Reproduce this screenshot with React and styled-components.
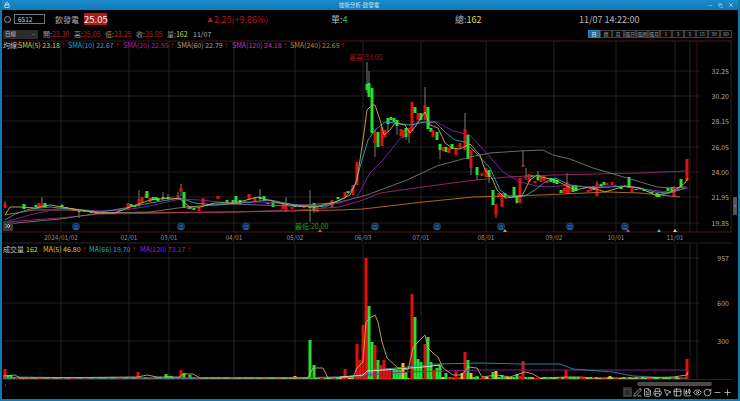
import React from "react";
import styled, { createGlobalStyle } from "styled-components";
import {
  Square,
  PenLine,
  FileText,
  Printer,
  MousePointer2,
  Table2,
  ChartCandlestick,
  Eye,
  RotateCw,
  Minus,
  Plus,
  Lock,
  ChevronsRight,
  ChevronDown,
  ChevronLeft,
  X,
  Copy,
} from "lucide-react";

const RED = "#e01010";
const GREEN = "#22e030";
const GOLD = "#f0c020";

const FONT = `"Noto Sans CJK TC", "Liberation Sans", sans-serif`;

// price panel: [x, bodyTop, bodyBottom, up?, wickTop, wickBottom]
const candles = [
  [5, 204, 208, 1, 201, 208], [24, 204, 209, 0], [36, 205, 207, 0], [39, 203, 208, 1], [42, 204, 206, 1, 197, 207],
  [45, 203, 207, 0], [62, 205, 207, 0, 204, 209], [79, 211, 212, 0, 210, 218], [120, 209, 211, 1], [128, 203, 209, 1],
  [131, 204, 206, 0], [135, 205, 207, 0], [139, 199, 206, 1, 190, 207], [142, 197, 203, 1], [146, 194, 198, 1],
  [147, 191, 198, 0], [150, 198, 202, 1], [153, 197, 200, 0], [156, 197, 200, 0], [158, 198, 201, 0], [163, 197, 199, 0, 192, 200],
  [168, 197, 199, 0, 194, 200], [178, 195, 198, 1, 192, 199], [181, 188, 192, 1, 184, 196], [184, 192, 208, 0], [188, 206, 209, 1],
  [190, 207, 209, 0], [194, 208, 210, 0], [199, 207, 211, 1], [203, 198, 205, 1], [218, 196, 199, 1], [227, 200, 203, 0],
  [233, 200, 204, 0], [236, 196, 203, 0], [240, 200, 204, 0], [249, 194, 200, 1], [255, 197, 201, 1], [260, 197, 199, 0, 189, 201],
  [264, 196, 201, 0], [273, 202, 207, 0], [283, 204, 209, 1], [286, 203, 211, 1, 197, 212], [292, 207, 209, 1], [295, 204, 207, 0],
  [310, 207, 208, 0, 190, 222], [314, 203, 211, 0, 203, 213], [317, 207, 212, 1], [332, 200, 208, 1], [338, 197, 199, 0],
  [345, 192, 197, 1], [348, 191, 193, 0], [353, 185, 195, 1], [357, 162, 185, 1],
  [367, 84, 90, 0, 62, 93], [369, 83, 97, 0, 71, 97], [372, 88, 133, 0], [375, 131, 143, 1, 130, 157], [378, 132, 147, 0],
  [382, 127, 146, 1], [385, 130, 137, 1], [388, 118, 124, 0, 118, 132], [391, 117, 120, 0], [394, 118, 122, 0], [397, 120, 126, 0, 120, 135],
  [401, 129, 136, 1], [403, 130, 138, 1], [406, 128, 137, 0, 128, 140], [409, 128, 135, 1, 128, 143], [412, 102, 131, 1], [415, 107, 113, 0],
  [418, 113, 120, 1], [421, 113, 120, 0], [425, 105, 120, 1, 87, 120], [428, 107, 129, 0], [431, 128, 132, 0], [433, 130, 137, 1],
  [437, 132, 140, 0], [440, 144, 150, 0, 144, 159], [443, 147, 151, 1], [446, 147, 152, 0], [449, 148, 153, 1], [452, 144, 149, 0],
  [456, 148, 155, 1], [460, 143, 148, 1], [465, 129, 150, 1, 113, 150], [468, 135, 159, 0], [471, 150, 168, 1, 150, 175], [477, 167, 175, 0, 167, 180],
  [482, 173, 176, 1], [486, 168, 177, 1], [489, 170, 177, 0, 170, 183], [493, 190, 205, 0], [496, 204, 215, 1, 204, 218], [499, 193, 197, 1],
  [502, 193, 207, 1], [505, 193, 197, 0], [514, 187, 197, 0], [517, 197, 203, 0], [520, 178, 203, 1], [523, 165, 167, 1, 151, 167],
  [526, 175, 178, 1, 168, 180], [529, 174, 182, 1], [532, 175, 177, 0], [535, 181, 183, 1], [538, 176, 180, 0, 171, 181], [541, 177, 182, 1],
  [544, 176, 181, 1], [547, 181, 183, 1], [551, 178, 182, 0], [554, 179, 183, 0], [557, 180, 184, 0], [561, 190, 193, 0], [564, 188, 193, 1],
  [567, 182, 194, 1, 173, 194], [569, 185, 194, 1], [573, 185, 192, 0], [576, 186, 191, 0], [588, 190, 192, 1], [591, 188, 191, 1], [594, 186, 190, 0],
  [597, 183, 196, 1, 181, 196], [601, 184, 187, 0], [604, 182, 185, 0], [607, 183, 185, 1], [612, 182, 185, 1], [615, 185, 187, 1], [621, 187, 189, 0],
  [629, 177, 188, 0], [632, 188, 192, 1], [657, 193, 197, 0], [659, 194, 197, 0], [668, 188, 191, 0], [672, 187, 191, 0], [674, 188, 197, 1, 186, 197],
  [678, 187, 191, 1], [681, 179, 188, 0], [687, 159, 181, 1],
];

// quiet days, almost flat bodies sitting on the short average: [x, y]
const flatDays = [
  [66, 207], [69, 208], [72, 208], [75, 209], [78, 209], [82, 210], [85, 211], [88, 211], [91, 212], [94, 212], [97, 213],
  [100, 213], [103, 213], [106, 213], [109, 213], [112, 213], [115, 212], [118, 211], [208, 204], [212, 203], [222, 202], [245, 201],
  [268, 203], [278, 205], [300, 206], [304, 207], [322, 206], [326, 205], [636, 189], [640, 189], [644, 190], [648, 191], [652, 192],
  [663, 193],
];

const sma5 = "5,215 10,207 20,207 35,208 50,205 62,207 80,210 100,213 115,213 130,207 150,200 170,198 180,199 190,207 200,207 215,203 235,203 258,197 275,202 295,206 315,207 335,202 350,195 357,180 363,140 367,110 372,105 375,105 380,120 384,135 390,130 395,123 405,125 410,133 415,127 425,112 430,125 438,128 445,143 452,148 460,149 470,144 480,155 485,170 492,178 497,190 505,198 515,197 522,196 530,180 537,175 545,178 555,180 565,185 575,190 590,187 605,192 625,186 640,188 655,195 665,194 675,190 685,183 688,178";
const sma10 = "5,220 15,214 30,209 50,207 70,209 100,212 125,208 150,203 180,198 195,203 215,205 240,203 270,200 295,205 325,207 345,198 355,185 362,160 368,140 375,130 385,122 395,123 410,125 425,122 435,122 445,132 455,140 465,142 475,152 490,168 500,190 510,197 525,196 535,190 545,182 555,178 570,185 590,188 610,187 625,186 640,188 655,192 670,193 685,188";
const sma20 = "5,222 30,215 60,208 100,211 125,210 150,206 180,199 200,200 230,203 260,202 290,204 320,206 340,203 357,197 370,173 383,160 403,135 417,122 437,122 453,131 470,135 490,157 503,172 520,182 537,186 550,187 570,185 590,187 610,186 630,187 650,190 670,192 688,188";
const sma60 = "5,224 60,219 100,213 150,212 185,207 230,204 290,206 320,204 340,202 367,195 407,180 437,166 470,157 490,153 520,151 543,150 553,155 570,159 593,168 627,178 657,187 673,188 687,187";
const sma120 = "5,222 60,218 100,214 167,213 230,212 300,210 340,207 363,200 380,193 423,187 467,181 507,177 553,175 640,173 687,171";
const sma240 = "5,215 33,210 67,210 117,213 233,212 340,210 363,209 423,202 473,197 540,195 607,192 640,193 680,197";

// volume panel: [x, top, kind]
const volumes = [
  [5, 369, "r"], [8, 375, "g"], [11, 375, "g"], [138, 372, "r"], [156, 377, "g"], [166, 374, "g"], [168, 376, "g"], [171, 376, "g"],
  [181, 370, "r"], [184, 373, "g"], [190, 375, "g"], [295, 376, "y"], [310, 340, "g"], [314, 365, "g"], [345, 369, "r"],
  [357, 344, "r"], [360, 360, "r"], [363, 325, "r"], [366, 258, "r"], [369, 306, "g"], [372, 342, "g"], [375, 345, "r"], [378, 360, "g"],
  [381, 365, "r"], [384, 360, "r"], [387, 368, "r"], [390, 368, "r"], [394, 370, "g"], [397, 370, "g"], [400, 370, "g"], [403, 363, "y"],
  [406, 372, "g"], [412, 294, "r"], [415, 317, "g"], [418, 359, "g"], [421, 362, "g"], [425, 344, "r"], [428, 337, "g"], [431, 362, "g"],
  [434, 370, "r"], [437, 368, "g"], [440, 365, "g"], [443, 377, "y"], [446, 373, "g"], [449, 378, "r"], [452, 377, "r"], [456, 371, "r"],
  [459, 377, "r"], [462, 373, "y"], [465, 352, "r"], [468, 360, "g"], [471, 373, "y"], [474, 377, "g"], [477, 376, "g"], [483, 377, "r"],
  [487, 377, "y"], [493, 372, "g"], [496, 371, "y"], [502, 375, "g"], [505, 377, "g"], [508, 377, "y"], [511, 378, "y"], [514, 377, "g"],
  [517, 374, "g"], [520, 376, "r"], [523, 361, "r"], [526, 377, "g"], [532, 378, "y"], [544, 377, "g"], [547, 378, "g"], [566, 370, "r"],
  [570, 377, "g"], [573, 377, "g"], [610, 376, "y"], [677, 377, "y"], [687, 359, "r"],
];

const volMa5 = "3,376 15,375 20,378 138,377 147,375 157,377 180,377 183,374 193,374 200,378 308,378 313,368 323,368 328,378 353,377 357,368 363,362 366,322 370,318 375,315 378,322 382,342 387,358 398,368 408,370 413,348 417,343 425,335 428,348 433,353 438,357 443,368 453,375 462,375 468,367 477,368 482,377 497,375 510,377 525,372 533,374 540,378 567,377 580,377 593,378 640,378 673,377 687,375 688,372";
const volMa66 = "3,378 20,377 100,378 200,378 300,378 340,377 360,377 373,370 407,367 437,364 480,363 520,364 560,364 573,369 613,372 633,376 673,378 687,378";
const volMa120 = "3,378 100,378 250,378 340,377 367,375 407,372 480,370 687,370";
const volPale = "340,377 353,376 363,375 367,371 385,370 423,367 440,365";

const hLines = [71, 96, 121, 147, 172, 197, 223];
const vLines = [61, 129, 169, 234, 295, 363, 421, 486, 554, 616, 675];
const priceTicks = [
  ["32.25", 71], ["30.20", 96], ["28.15", 121], ["26.05", 147], ["24.00", 172], ["21.95", 197], ["19.85", 223],
];
const dates = [
  ["2024/01/02", 61], ["02/01", 129], ["03/01", 169], ["04/01", 234], ["05/02", 295], ["06/03", 363],
  ["07/01", 421], ["08/01", 486], ["09/02", 554], ["10/01", 616], ["11/01", 675],
];
const monthMarks = [76, 181, 246, 375, 437, 501, 570, 625];
const triangles = [
  [320, "#e040a0"], [505, "#a0a0b0"], [628, "#c030e0"], [659, "#30c0e0"], [675, "#f0e040"],
];
const volTicks = [["957", 258], ["600", 303], ["300", 341]];

const smaLegend = [
  { label: "SMA(5) 23.18", color: "#d8d040", width: 50 },
  { label: "SMA(10) 22.67", color: "#20b0c0", width: 55 },
  { label: "SMA(20) 22.55", color: "#a020d0", width: 54 },
  { label: "SMA(60) 22.79", color: "#a0a0a0", width: 55 },
  { label: "SMA(120) 24.18", color: "#d030a0", width: 58 },
  { label: "SMA(240) 22.65", color: "#d08020", width: 70 },
];
const volLegend = [
  { label: "MA(5) 46.80", color: "#d8d040", width: 46 },
  { label: "MA(66) 19.70", color: "#20b0c0", width: 51 },
  { label: "MA(120) 73.17", color: "#a020d0", width: 60 },
];
const periods = ["日", "週", "月", "還日", "還週", "還月", "1", "3", "5", "15", "30", "60"];
const quotes = [
  ["開", "23.30"], ["高", "25.05"], ["低", "23.25"], ["收", "25.05"],
];
const tools = [Square, PenLine, FileText, Printer, MousePointer2, Table2, ChartCandlestick, Eye, RotateCw, Minus, Plus];

const GlobalStyle = createGlobalStyle`
  html, body { margin: 0; padding: 0; background: #000; }
  body { font-family: ${FONT}; overflow: hidden; }
`;

const Win = styled.div`
  width: 740px;
  height: 401px;
  box-sizing: border-box;
  display: flex;
  flex-direction: column;
  background: #000;
  border: 2px solid #1179b5;
  border-top: none;
  overflow: hidden;
`;

const TitleBar = styled.header`
  height: 10px;
  margin: 0 -2px;
  padding: 0 6px 0 4px;
  flex: none;
  display: flex;
  align-items: center;
  justify-content: space-between;
  background: linear-gradient(#1a8ccb, #1179b5);
  color: #cfe6f3;
  font-size: 5.5px;
  line-height: 10px;
  svg { display: block; }
`;

const WinControls = styled.div`
  display: flex;
  gap: 5px;
  align-items: center;
`;

const QuoteRow = styled.div`
  height: 18px;
  flex: none;
  display: grid;
  grid-template-columns: 53px 29px 123px 124px 124px 124px auto;
  align-items: center;
  color: #b8b8b8;
  font-size: 9px;
`;

const SymbolBox = styled.div`
  display: flex;
  align-items: center;
  gap: 3px;
  padding-left: 2px;
`;

const SearchDot = styled.span`
  width: 5px;
  height: 5px;
  border: 1px solid #999;
  border-radius: 50%;
`;

const SymbolInput = styled.div`
  width: 31px;
  height: 10px;
  box-sizing: border-box;
  border: 1px solid #777;
  padding-left: 3px;
  font-size: 6.5px;
  line-height: 8px;
  color: #c8c8c8;
`;

const StockName = styled.span`
  font-size: 8px;
  color: #a8a8a8;
`;

const PriceBox = styled.span`
  width: 23px;
  height: 12px;
  background: #b01818;
  color: #f4f4f4;
  font-size: 9.5px;
  line-height: 12px;
  text-align: center;
`;

const Change = styled.span`
  display: flex;
  align-items: center;
  gap: 1px;
  color: #b81818;
  font-size: 9px;
  white-space: nowrap;
  i {
    font-style: normal;
    font-size: 6px;
  }
`;

const Stat = styled.span`
  font-size: 9px;
  white-space: nowrap;
  b {
    font-weight: 400;
    color: ${(p) => p.$color};
  }
`;

const Clock = styled.span`
  font-size: 9px;
  color: #b8b8b8;
  white-space: nowrap;
`;

const FilterRow = styled.div`
  height: 12px;
  flex: none;
  display: flex;
  align-items: center;
  padding-left: 1px;
  font-size: 7px;
  color: #9a9a9a;
`;

const Select = styled.div`
  width: 35px;
  height: 9px;
  margin-right: 5px;
  padding: 0 2px;
  box-sizing: border-box;
  display: flex;
  align-items: center;
  justify-content: space-between;
  background: #2c2c2c;
  color: #c0c0c0;
  font-size: 5.5px;
`;

const QuoteItem = styled.span`
  width: 31px;
  white-space: nowrap;
  b {
    font-weight: 400;
    color: #c41a1a;
  }
`;

const VolumeItem = styled.span`
  width: 26px;
  b {
    font-weight: 400;
    color: #d8d840;
  }
`;

const DateItem = styled.span`
  color: #b0b0b0;
`;

const Periods = styled.div`
  margin-left: auto;
  margin-right: 6px;
  display: flex;
`;

const PeriodButton = styled.span`
  width: 12px;
  height: 8px;
  box-sizing: border-box;
  border: 1px solid ${(p) => (p.$active ? "#2a7fb0" : "#3c3c3c")};
  background: ${(p) => (p.$active ? "#1f6e9e" : "#0c0c0c")};
  color: ${(p) => (p.$active ? "#e8f4fa" : "#9a9a9a")};
  font-size: 5px;
  line-height: 6px;
  text-align: center;
  white-space: nowrap;
  overflow: hidden;
`;

const Panel = styled.section`
  position: relative;
  height: ${(p) => p.$height}px;
  flex: none;
  svg { display: block; }
`;

const LegendBar = styled.div`
  position: absolute;
  top: 0;
  left: 1px;
  display: flex;
  align-items: center;
  height: 9px;
  font-size: 7px;
  white-space: nowrap;
  color: #c8c8c8;
`;

const LegendLead = styled.span`
  width: ${(p) => p.$width}px;
  color: ${(p) => p.$color || "#c8c8c8"};
`;

const LegendItem = styled.span`
  width: ${(p) => p.$width}px;
  color: ${(p) => p.$color};
  i {
    font-style: normal;
    font-size: 5.5px;
    color: #d01818;
    margin-left: 1px;
  }
`;

const MoreButton = styled.button`
  position: absolute;
  left: 1px;
  top: 181px;
  width: 10px;
  height: 10px;
  padding: 0;
  border: none;
  background: #3a3a3a;
  color: #d8d8d8;
  display: flex;
  align-items: center;
  justify-content: center;
`;

const SideGrip = styled.div`
  position: absolute;
  right: 1px;
  top: 157px;
  width: 4px;
  height: 18px;
  background: #555;
  color: #ccc;
  display: flex;
  align-items: center;
  justify-content: center;
`;

const BottomBar = styled.footer`
  flex: 1;
  position: relative;
  display: flex;
  flex-direction: column;
  align-items: flex-end;
`;

const ScrollThumb = styled.div`
  width: 75px;
  height: 4px;
  margin: 2px 26px 1px 0;
  border-radius: 2px;
  background: #4a4a4a;
  flex: none;
`;

const ToolBar = styled.div`
  display: flex;
  align-items: center;
  gap: 1px;
  margin-right: 6px;
`;

const ToolButton = styled.span`
  width: 9px;
  height: 10px;
  display: flex;
  align-items: center;
  justify-content: center;
  background: ${(p) => (p.$dim ? "#2c2c2c" : "transparent")};
  color: ${(p) => (p.$dim ? "#555" : "#d4d4d4")};
`;

const RedTick = styled.span`
  position: absolute;
  left: 3px;
  top: 4px;
  width: 1px;
  height: 2px;
  background: #a01818;
`;

const AxisText = styled.text`
  font-family: ${FONT};
  font-size: ${(p) => p.$size || 7}px;
`;

const Candle = ({ c }) => {
  const [x, top, bottom, up, wickTop, wickBottom] = c;
  const color = up ? RED : GREEN;
  return (
    <g>
      {wickTop !== undefined && (
        <line x1={x} x2={x} y1={wickTop} y2={wickBottom} stroke="#8a8a8a" strokeWidth="0.9" />
      )}
      <rect x={x - 1.5} y={top} width="3" height={bottom - top} fill={color} />
    </g>
  );
};

const PriceChart = () => (
  <svg width="736" height="205" viewBox="2 40 736 205">
    <line x1="0" x2="732" y1="41" y2="41" stroke="#4a1420" />
    {hLines.map((y) => (
      <line key={y} x1="3" x2="700" y1={y} y2={y} stroke="#2a2a2a" strokeWidth="0.8" />
    ))}
    {vLines.map((x) => (
      <line key={x} x1={x} x2={x} y1="41" y2="232" stroke="#2c2c2c" strokeWidth="0.8" />
    ))}
    <line x1="690" x2="690" y1="41" y2="232" stroke="#2c2c2c" strokeWidth="0.8" />
    <line x1="697" x2="697" y1="41" y2="232" stroke="#4a1420" strokeWidth="0.8" />
    <line x1="731" x2="731" y1="41" y2="232" stroke="#2c2c2c" strokeWidth="0.8" />
    <line x1="0" x2="732" y1="232" y2="232" stroke="#4a1420" />
    <line x1="0" x2="732" y1="243" y2="243" stroke="#262626" />
    {candles.map((c, i) => (
      <Candle key={i} c={c} />
    ))}
    {flatDays.map(([x, y], i) => (
      <rect key={x} x={x - 1.5} y={y} width="3" height="1" fill={i % 2 ? RED : GREEN} />
    ))}
    <polyline points={sma240} fill="none" stroke="#c07020" strokeWidth="0.9" />
    <polyline points={sma120} fill="none" stroke="#a02870" strokeWidth="0.9" />
    <polyline points={sma60} fill="none" stroke="#787878" strokeWidth="0.9" />
    <polyline points={sma20} fill="none" stroke="#8a20a8" strokeWidth="0.9" />
    <polyline points={sma10} fill="none" stroke="#2aa8b8" strokeWidth="0.9" />
    <polyline points={sma5} fill="none" stroke="#c8b050" strokeWidth="0.9" />
    {monthMarks.map((x) => (
      <g key={x}>
        <circle cx={x} cy="226.5" r="3.5" fill="#0a2a50" stroke="#1a5a9a" strokeWidth="0.8" />
        <AxisText x={x} y="228.5" fill="#3a80c8" textAnchor="middle" $size="5">月</AxisText>
      </g>
    ))}
    {triangles.map(([x, color]) => (
      <polygon key={x} points={`${x - 2},232 ${x + 2},232 ${x},229`} fill={color} />
    ))}
    <AxisText x="349" y="60" fill="#a01818">最高:33.00</AxisText>
    <AxisText x="295" y="229" fill="#20a020">最低:20.00</AxisText>
    {priceTicks.map(([label, y]) => (
      <AxisText key={label} x="729" y={y + 2.5} fill="#a8a8a8" textAnchor="end">{label}</AxisText>
    ))}
    {dates.map(([label, x]) => (
      <AxisText key={label} x={x} y="240" fill="#909090" textAnchor="middle" $size="6.5">{label}</AxisText>
    ))}
  </svg>
);

const VolumeChart = () => {
  const small = [];
  for (let x = 14; x < 687; x += 3.05) {
    const kind = Math.round(x * 7) % 5;
    small.push(
      <rect
        key={x}
        x={x - 1.5}
        y={378 - (kind % 2)}
        width="3"
        height={1 + (kind % 2)}
        fill={[RED, GREEN, GOLD, GREEN, RED][kind]}
      />
    );
  }
  const colors = { r: RED, g: GREEN, y: GOLD };
  return (
    <svg width="736" height="136" viewBox="2 244 736 136">
      {[258, 303, 341].map((y) => (
        <line key={y} x1="3" x2="700" y1={y} y2={y} stroke="#2a2a2a" strokeWidth="0.8" />
      ))}
      {vLines.map((x) => (
        <line key={x} x1={x} x2={x} y1="244" y2="379" stroke="#2c2c2c" strokeWidth="0.8" />
      ))}
      <line x1="690" x2="690" y1="244" y2="379" stroke="#2c2c2c" strokeWidth="0.8" />
      <line x1="697" x2="697" y1="244" y2="379" stroke="#2c2c2c" strokeWidth="0.8" />
      <line x1="3" x2="732" y1="379.5" y2="379.5" stroke="#333" strokeWidth="0.8" />
      {small}
      {volumes.map(([x, top, kind]) => (
        <rect key={x} x={x - 1.5} y={top} width="3" height={379 - top} fill={colors[kind]} />
      ))}
      <polyline points={volMa120} fill="none" stroke="#8a20a8" strokeWidth="0.9" />
      <polyline points={volMa66} fill="none" stroke="#2a90a8" strokeWidth="0.9" />
      <polyline points={volPale} fill="none" stroke="#e8e8d8" strokeWidth="0.9" />
      <polyline points={volMa5} fill="none" stroke="#c8b050" strokeWidth="0.9" />
      {volTicks.map(([label, y]) => (
        <AxisText key={label} x="729" y={y + 2.5} fill="#a8a8a8" textAnchor="end">{label}</AxisText>
      ))}
    </svg>
  );
};

export default function App() {
  return (
    <Win>
      <GlobalStyle />
      <TitleBar>
        <Lock size={6} color="#e8f4fa" strokeWidth={3} />
        <span>技術分析-飲發電</span>
        <WinControls>
          <Minus size={5} strokeWidth={2} />
          <Copy size={5} strokeWidth={2} />
          <X size={6} strokeWidth={2.5} />
        </WinControls>
      </TitleBar>

      <QuoteRow>
        <SymbolBox>
          <SearchDot />
          <SymbolInput>6512</SymbolInput>
        </SymbolBox>
        <StockName>飲發電</StockName>
        <PriceBox>25.05</PriceBox>
        <Change><i>▲</i>2.25(+9.86%)</Change>
        <Stat $color="#20d040">單:<b>4</b></Stat>
        <Stat $color="#d8d840">總:<b>162</b></Stat>
        <Clock>11/07 14:22:00</Clock>
      </QuoteRow>

      <FilterRow>
        <Select>
          日線
          <ChevronDown size={5} />
        </Select>
        {quotes.map(([name, value]) => (
          <QuoteItem key={name}>
            {name}:<b>{value}</b>
          </QuoteItem>
        ))}
        <VolumeItem>量:<b>162</b></VolumeItem>
        <DateItem>11/07</DateItem>
        <Periods>
          {periods.map((p, i) => (
            <PeriodButton key={p} $active={i === 0}>{p}</PeriodButton>
          ))}
        </Periods>
      </FilterRow>

      <Panel $height={204}>
        <PriceChart />
        <LegendBar>
          <LegendLead $width={15}>均線:</LegendLead>
          {smaLegend.map((s) => (
            <LegendItem key={s.label} $color={s.color} $width={s.width}>
              {s.label}<i>↑</i>
            </LegendItem>
          ))}
        </LegendBar>
        <MoreButton aria-label="more">
          <ChevronsRight size={8} strokeWidth={2.5} />
        </MoreButton>
        <SideGrip>
          <ChevronLeft size={4} strokeWidth={3} />
        </SideGrip>
      </Panel>

      <Panel $height={136}>
        <VolumeChart />
        <LegendBar>
          <LegendLead $width={23}>成交量</LegendLead>
          <LegendLead $width={17} $color="#d8d840">162</LegendLead>
          {volLegend.map((s) => (
            <LegendItem key={s.label} $color={s.color} $width={s.width}>
              {s.label}<i>↑</i>
            </LegendItem>
          ))}
        </LegendBar>
      </Panel>

      <BottomBar>
        <RedTick />
        <ScrollThumb />
        <ToolBar>
          {tools.map((Icon, i) => (
            <ToolButton key={i} $dim={i === 0}>
              <Icon size={9} strokeWidth={2} />
            </ToolButton>
          ))}
        </ToolBar>
      </BottomBar>
    </Win>
  );
}
